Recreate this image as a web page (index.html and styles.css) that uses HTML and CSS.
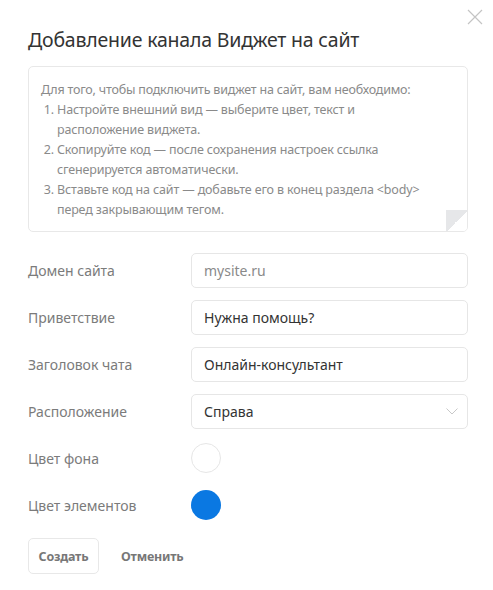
FILE: index.html
```html
<!DOCTYPE html>
<html lang="ru">
<head>
<meta charset="utf-8">
<link rel="stylesheet" href="styles.css">
</head>
<body>
<div class="modal">
  <button class="close" aria-label="Закрыть">
    <svg width="16" height="16" viewBox="0 0 16 16"><path d="M1 1L15 15M15 1L1 15" stroke="#c4c4c4" stroke-width="1.2" fill="none"/></svg>
  </button>
  <h1 class="title">Добавление канала Виджет на сайт</h1>
  <div class="note">
    <p class="note-lead">Для того, чтобы подключить виджет на сайт, вам необходимо:</p>
    <ol class="note-list">
      <li>Настройте внешний вид — выберите цвет, текст и расположение виджета.</li>
      <li>Скопируйте код — после сохранения настроек ссылка сгенерируется автоматически.</li>
      <li>Вставьте код на сайт — добавьте его в конец раздела &lt;body&gt; перед закрывающим тегом.</li>
    </ol>
    <span class="fold"></span>
  </div>
  <div class="form">
    <div class="row">
      <label class="label">Домен сайта</label>
      <div class="field placeholder">mysite.ru</div>
    </div>
    <div class="row">
      <label class="label">Приветствие</label>
      <div class="field">Нужна помощь?</div>
    </div>
    <div class="row">
      <label class="label">Заголовок чата</label>
      <div class="field">Онлайн-консультант</div>
    </div>
    <div class="row">
      <label class="label">Расположение</label>
      <div class="field select">Справа
        <svg class="chev" width="12" height="7" viewBox="0 0 12 7"><path d="M0.5 0.5L6 6L11.5 0.5" stroke="#c8c8c8" stroke-width="1" fill="none"/></svg>
      </div>
    </div>
    <div class="row row-color">
      <label class="label">Цвет фона</label>
      <span class="swatch swatch-white"></span>
    </div>
    <div class="row row-color">
      <label class="label">Цвет элементов</label>
      <span class="swatch swatch-blue"></span>
    </div>
  </div>
  <div class="actions">
    <button class="btn btn-primary">Создать</button>
    <button class="btn btn-link">Отменить</button>
  </div>
</div>
</body>
</html>
```
FILE: styles.css
```css
* { box-sizing: border-box; }
html, body { margin: 0; padding: 0; background: #fff; }
body {
  font-family: "Noto Sans", "Open Sans", sans-serif;
  color: #333;
}
.modal {
  position: relative;
  width: 493px;
  height: 590px;
  padding: 25px 25px 0 28px;
}
.close {
  position: absolute;
  top: 9px;
  right: 10px;
  width: 16px;
  height: 16px;
  padding: 0;
  border: 0;
  background: none;
  display: block;
}
.close svg { display: block; }
.title {
  margin: 0 0 11px 0;
  font-size: 19.5px;
  font-weight: 400;
  line-height: 30px;
  color: #333;
  letter-spacing: -0.2px;
}
.note {
  position: relative;
  border: 1px solid #e8e8e8;
  border-radius: 5px;
  padding: 13px 27px 10px 12px;
  font-size: 12.5px;
  line-height: 20px;
  color: #8a8a8a;
  height: 166px;
  overflow: hidden;
}
.note-lead { margin: 0; letter-spacing: -0.2px; }
.note-list {
  margin: 0;
  padding: 0 0 0 16px;
  letter-spacing: -0.15px;
}
.fold {
  position: absolute;
  right: -1px;
  bottom: -1px;
  width: 22px;
  height: 22px;
  background: linear-gradient(135deg, #e6e7e9 50%, #fff 50%);
}
.form {
  margin-top: 21px;
  display: flex;
  flex-direction: column;
  gap: 12px;
}
.row {
  display: grid;
  grid-template-columns: 163px 1fr;
  align-items: center;
  height: 35px;
}
.label {
  font-size: 14px;
  color: #7b7b7b;
}
.field {
  height: 35px;
  border: 1px solid #e6e6e6;
  border-radius: 5px;
  padding: 0 12px;
  display: flex;
  align-items: center;
  font-size: 14px;
  color: #333;
}
.placeholder { color: #8a8a8a; }
.select { justify-content: space-between; }
.chev { display: block; margin-right: -3px; }
.swatch {
  width: 30px;
  height: 30px;
  border-radius: 50%;
  display: block;
  margin-top: -2px;
}
.swatch-white { border: 1px solid #e6e6e6; background: #fff; }
.swatch-blue { background: #0a78e2; }
.actions {
  margin-top: 15px;
  display: flex;
  align-items: center;
  gap: 22px;
}
.btn {
  font-family: "Noto Sans", sans-serif;
  font-size: 12.5px;
  font-weight: 700;
  color: #777;
  background: #fff;
  border: 0;
  padding: 0;
  letter-spacing: -0.2px;
}
.btn-primary {
  border: 1px solid #e8e8e8;
  border-radius: 5px;
  height: 36px;
  width: 71px;
}
```
